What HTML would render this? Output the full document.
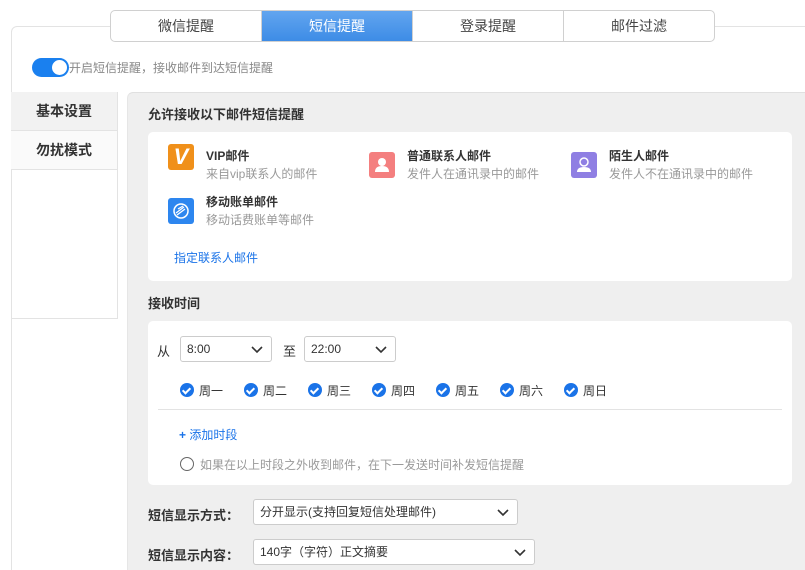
<!DOCTYPE html>
<html style="width:805px;height:570px;overflow:hidden"><head><meta charset="utf-8"><style>
*{box-sizing:border-box;margin:0;padding:0}
body{width:805px;height:570px;overflow:hidden;background:#fff;font-family:"Liberation Sans","Noto Sans CJK SC",sans-serif;font-size:12px;color:#333;position:relative}
.abs{position:absolute}
.card{left:11px;top:26px;width:800px;height:544px;border:1px solid #e3e3e3;border-bottom:none;border-radius:6px 6px 0 0;background:#fff}
.tabs{left:110px;top:10px;width:605px;height:32px;border:1px solid #d0d0d0;border-radius:5px;background:#fff;display:flex;overflow:hidden}
.tabs div{flex:1;text-align:center;line-height:30px;font-size:14px;color:#444;border-right:1px solid #d0d0d0}
.tabs div:last-child{border-right:none}
.tabs .on{background:linear-gradient(#62a5ef,#3d8ce6);color:#fff}
.tog{left:32px;top:58px;width:37px;height:19px;border-radius:10px;background:#1a80ef}
.tog:after{content:"";position:absolute;right:2px;top:2px;width:15px;height:15px;border-radius:50%;background:#fff}
.side{left:11px;top:92px;width:107px;height:227px;border-right:1px solid #e3e3e3;border-bottom:1px solid #e3e3e3}
.side div{height:39px;line-height:39px;padding-left:25px;font-size:14px;font-weight:bold;color:#333;background:#f2f2f2;border-bottom:1px solid #e3e3e3}
.panel{left:127px;top:92px;width:690px;height:478px;background:#efefef;border-top:1px solid #e0e0e0;border-left:1px solid #e6e6e6;border-top-left-radius:6px}
.h{font-size:13px;font-weight:bold;color:#333}
.w{background:#fff;border-radius:5px}
.ic{width:26px;height:26px;border-radius:3px}
.t{font-size:12px;font-weight:bold;color:#333}
.s{font-size:12px;color:#999}
.sel{border:1px solid #ccc;border-radius:3px;background:#fff;height:26px;line-height:24px;padding-left:6px;font-size:12px;color:#333}
.sel svg{position:absolute;right:8px;top:9px}
.chk{width:14px;height:14px;border-radius:50%;background:#1a73e8;display:inline-block;vertical-align:-2px;margin-right:5px;position:relative}
.chk:after{content:"";position:absolute;left:4px;top:3px;width:3px;height:6px;border:solid #fff;border-width:0 2px 2px 0;transform:rotate(45deg)}
.day{top:382px;font-size:12px;color:#333}
</style></head><body>
<div class="abs card"></div>
<div class="abs tabs"><div>微信提醒</div><div class="on">短信提醒</div><div>登录提醒</div><div>邮件过滤</div></div>
<div class="abs tog"></div>
<div class="abs" style="left:69px;top:59px;color:#888;font-size:12px">开启短信提醒，接收邮件到达短信提醒</div>
<div class="abs side"><div>基本设置</div><div style="background:#fafafa">勿扰模式</div></div>
<div class="abs panel"></div>
<div class="abs h" style="left:148px;top:104px">允许接收以下邮件短信提醒</div>
<div class="abs w" style="left:148px;top:132px;width:644px;height:149px"></div>
<div class="abs ic" style="left:168px;top:144px;background:#f0901a;color:#fff;font:bold italic 22px 'Liberation Sans';text-align:center;line-height:26px">V</div>
<div class="abs t" style="left:206px;top:147px">VIP邮件</div><div class="abs s" style="left:206px;top:165px">来自vip联系人的邮件</div>
<div class="abs ic" style="left:369px;top:152px;background:#f47f7f"><svg width="26" height="26"><circle cx="13" cy="10" r="4" fill="#fff"/><path d="M6 20q0-6 7-6t7 6z" fill="#fff"/></svg></div>
<div class="abs t" style="left:407px;top:147px">普通联系人邮件</div><div class="abs s" style="left:407px;top:165px">发件人在通讯录中的邮件</div>
<div class="abs ic" style="left:571px;top:152px;background:#8f7fe3"><svg width="26" height="26"><circle cx="13" cy="10" r="4" fill="none" stroke="#fff" stroke-width="1.5"/><path d="M6 20q0-5 7-5t7 5z" fill="#fff"/></svg></div>
<div class="abs t" style="left:609px;top:147px">陌生人邮件</div><div class="abs s" style="left:609px;top:165px">发件人不在通讯录中的邮件</div>
<div class="abs ic" style="left:168px;top:198px;background:#2d86ef"><svg width="26" height="26"><circle cx="13" cy="13" r="7" fill="none" stroke="#fff" stroke-width="1.5"/><path d="M8 15l8-6M9 17l8-6M10 11l5-3" stroke="#fff" stroke-width="1.3"/></svg></div>
<div class="abs t" style="left:206px;top:193px">移动账单邮件</div><div class="abs s" style="left:206px;top:211px">移动话费账单等邮件</div>
<div class="abs" style="left:174px;top:249px;color:#1a73e8">指定联系人邮件</div>
<div class="abs h" style="left:148px;top:293px">接收时间</div>
<div class="abs w" style="left:148px;top:321px;width:644px;height:164px"></div>
<div class="abs" style="left:157px;top:341px;font-size:13px">从</div>
<div class="abs sel" style="left:180px;top:336px;width:92px">8:00<svg width="12" height="8"><path d="M1 1l5 5 5-5" stroke="#333" stroke-width="1.6" fill="none"/></svg></div>
<div class="abs" style="left:283px;top:341px;font-size:13px">至</div>
<div class="abs sel" style="left:304px;top:336px;width:92px">22:00<svg width="12" height="8"><path d="M1 1l5 5 5-5" stroke="#333" stroke-width="1.6" fill="none"/></svg></div>
<div class="abs day" style="left:180px"><span class="chk"></span>周一</div>
<div class="abs day" style="left:244px"><span class="chk"></span>周二</div>
<div class="abs day" style="left:308px"><span class="chk"></span>周三</div>
<div class="abs day" style="left:372px"><span class="chk"></span>周四</div>
<div class="abs day" style="left:436px"><span class="chk"></span>周五</div>
<div class="abs day" style="left:500px"><span class="chk"></span>周六</div>
<div class="abs day" style="left:564px"><span class="chk"></span>周日</div>
<div class="abs" style="left:158px;top:409px;width:624px;height:1px;background:#e3e3e3"></div>
<div class="abs" style="left:179px;top:426px;color:#1a73e8"><b>+</b> 添加时段</div>
<div class="abs" style="left:180px;top:457px;width:14px;height:14px;border:1.5px solid #666;border-radius:50%"></div>
<div class="abs" style="left:200px;top:456px;color:#999">如果在以上时段之外收到邮件，在下一发送时间补发短信提醒</div>
<div class="abs h" style="left:148px;top:505px">短信显示方式：</div>
<div class="abs sel" style="left:253px;top:499px;width:265px;height:26px">分开显示(支持回复短信处理邮件)<svg width="12" height="8"><path d="M1 1l5 5 5-5" stroke="#333" stroke-width="1.6" fill="none"/></svg></div>
<div class="abs h" style="left:148px;top:545px">短信显示内容：</div>
<div class="abs sel" style="left:253px;top:539px;width:282px;height:26px">140字（字符）正文摘要<svg width="12" height="8"><path d="M1 1l5 5 5-5" stroke="#333" stroke-width="1.6" fill="none"/></svg></div>
</body></html>
